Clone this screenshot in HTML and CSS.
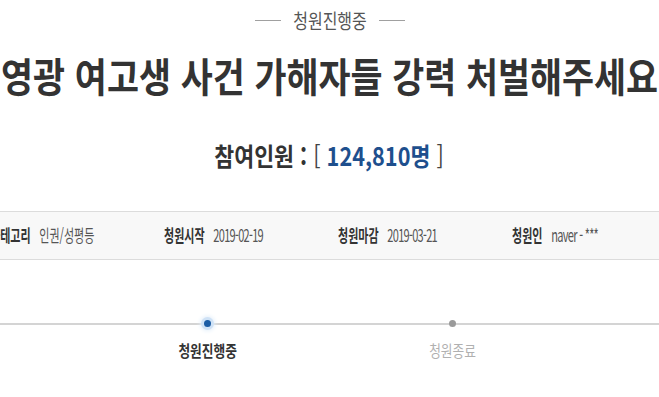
FILE: index.html
```html
<!DOCTYPE html>
<html lang="ko">
<head>
<meta charset="utf-8">
<link rel="stylesheet" href="styles.css">
</head>
<body>
<div class="page">
  <div class="status">
    <span class="status-line"></span>
    <span class="status-text">청원진행중</span>
    <span class="status-line"></span>
  </div>
  <h1 class="title"><span class="title-text">영광 여고생 사건 가해자들 강력 처벌해주세요</span></h1>
  <p class="count"><span class="count-text">참여인원 : <span class="bracket">[</span> <span class="num">124,810명</span> <span class="bracket">]</span></span></p>
  <div class="info">
    <ul class="info-row">
      <li class="info-item"><span class="sq"><b>카테고리</b> <span class="val">인권/성평등</span></span></li>
      <li class="info-item"><span class="sq"><b>청원시작</b> <span class="val num-val">2019-02-19</span></span></li>
      <li class="info-item"><span class="sq"><b>청원마감</b> <span class="val num-val">2019-03-21</span></span></li>
      <li class="info-item"><span class="sq"><b>청원인</b> <span class="val num-val">naver - ***</span></span></li>
    </ul>
  </div>
  <div class="progress">
    <ol class="steps">
      <li class="step"><span class="dot"></span><span class="step-label">청원시작</span></li>
      <li class="step active"><span class="dot"></span><span class="step-label">청원진행중</span></li>
      <li class="step"><span class="dot"></span><span class="step-label">청원종료</span></li>
      <li class="step"><span class="dot"></span><span class="step-label">청원답변</span></li>
    </ol>
  </div>
</div>
</body>
</html>
```
FILE: styles.css
```css
html, body {
  margin: 0;
  padding: 0;
  background: #fff;
}
body {
  width: 659px;
  height: 397px;
  overflow: hidden;
  font-family: "Noto Sans CJK KR", "Noto Sans", sans-serif;
  color: #333;
}
.page {
  display: flex;
  flex-direction: column;
  align-items: center;
}
.status {
  display: flex;
  align-items: center;
  gap: 12px;
  height: 40px;
}
.status-line {
  width: 26px;
  height: 1px;
  background: #a0a0a0;
}
.status-text {
  display: inline-block;
  font-size: 20px;
  color: #555;
  transform: scaleX(0.8);
  margin: 0 -9px;
}
.title {
  margin: 6px 0 0;
  height: 58px;
  font-size: 40px;
  line-height: 58px;
  font-weight: 700;
  white-space: nowrap;
  color: #333;
}
.title-text {
  display: inline-block;
  transform: scaleX(0.87);
}
.count {
  margin: 31px 0 0;
  height: 40px;
  line-height: 40px;
  font-size: 25.5px;
  font-weight: 700;
  white-space: nowrap;
  color: #333;
}
.count-text {
  display: inline-block;
  transform: scaleX(0.85);
}
.bracket {
  font-weight: 400;
  color: #444;
}
.num {
  color: #1e4f8d;
}
.info {
  align-self: stretch;
  margin-top: 36px;
  background: #f8f8f8;
  border-top: 1px solid #dcdcdc;
  border-bottom: 1px solid #dcdcdc;
  height: 47px;
}
.info-row {
  list-style: none;
  margin: 0 0 0 -10px;
  padding: 0 0 2px;
  display: flex;
  height: 45px;
  align-items: center;
}
.info-item {
  flex: 0 0 174px;
  white-space: nowrap;
  font-size: 17.5px;
}
.sq {
  display: inline-block;
  transform: scaleX(0.63);
  transform-origin: left center;
}
.sq b {
  font-weight: 700;
  color: #333;
  margin-right: 9px;
}
.val {
  color: #555;
}
.num-val {
  letter-spacing: -1.1px;
}
.progress {
  align-self: stretch;
  margin-top: 57px;
}
.steps {
  list-style: none;
  margin: 0 0 0 -160px;
  padding: 0;
  display: flex;
  position: relative;
}
.steps::before {
  content: "";
  position: absolute;
  left: 0;
  right: -200px;
  top: 6px;
  height: 2px;
  background: #d4d4d4;
}
.step {
  flex: 0 0 245px;
  display: flex;
  flex-direction: column;
  align-items: center;
  position: relative;
}
.dot {
  width: 7px;
  height: 7px;
  margin-top: 3px;
  border-radius: 50%;
  background: #9a9a9a;
}
.step.active .dot {
  background: #1a5ca5;
  box-shadow: 0 0 0 3px #cfe2f6, 0 0 4px 4px #e4effa;
}
.step-label {
  display: inline-block;
  margin-top: 12px;
  font-size: 15.5px;
  color: #b0b0b0;
  transform: scaleX(0.82);
  white-space: nowrap;
}
.step.active .step-label {
  color: #333;
  font-weight: 700;
}
```
